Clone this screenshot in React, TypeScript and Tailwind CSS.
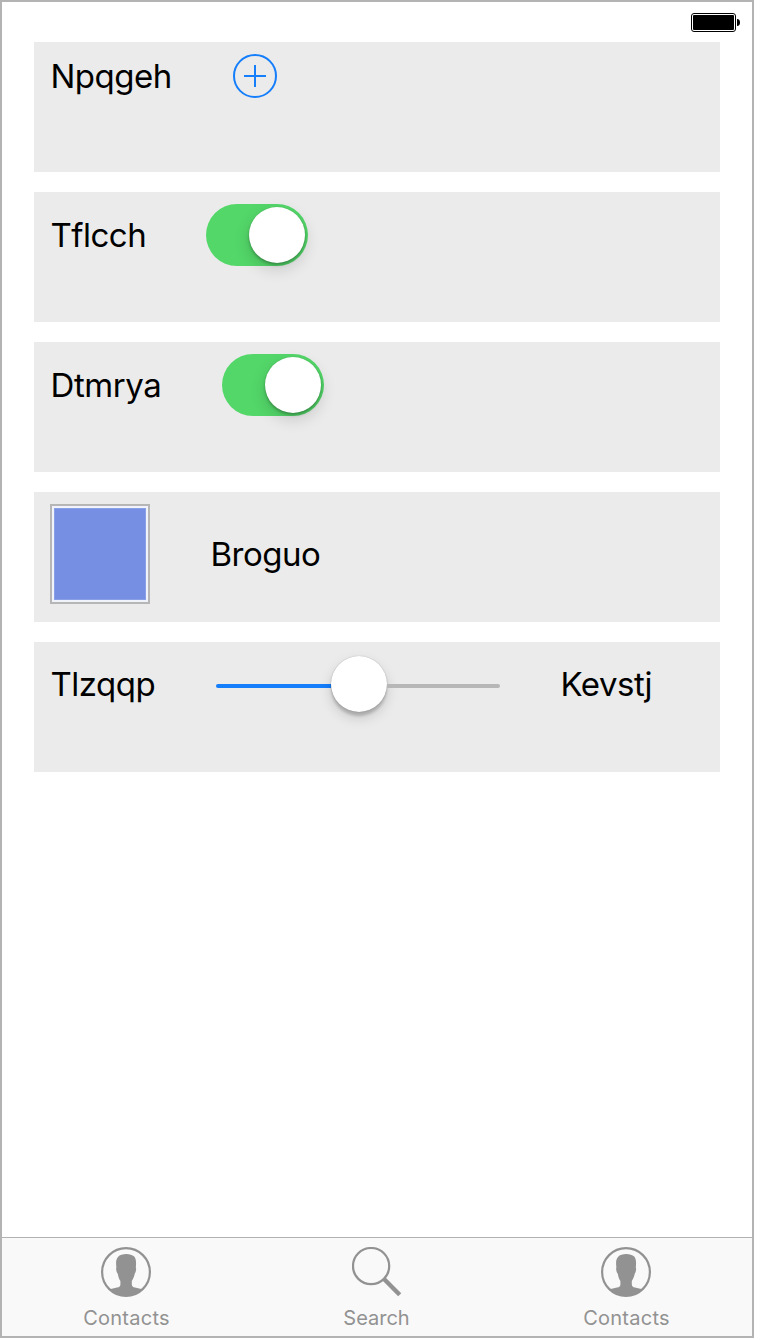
import type { ReactNode } from "react";

function Row({ children }: { children: ReactNode }) {
  return <section className="flex h-[130px] items-start gap-[60px] bg-[#ebebeb] px-4 pt-3">{children}</section>;
}

function Label({ children, className }: { children: ReactNode; className: string }) {
  return (
    <span className={"shrink-0 whitespace-nowrap pl-[0.5px] text-[33px] leading-10 text-black " + className}>{children}</span>
  );
}

function Switch() {
  return (
    <button role="switch" aria-checked="true" className="flex h-[62px] w-[102px] shrink-0 items-center justify-end rounded-full bg-[#53d769] pr-[3px]">
      <span className="size-14 rounded-full bg-white shadow-[0_6px_16px_rgba(0,0,0,0.16),0_2px_3px_rgba(0,0,0,0.25),0_0_1px_rgba(0,0,0,0.15)]" />
    </button>
  );
}

function ContactIcon() {
  return (
    <svg className="mr-[2px]" width="50" height="50" viewBox="0 0 50 50" fill="none">
      <circle cx="25" cy="25" r="23.9" stroke="#929292" strokeWidth="2.2" />
      <path
        fill="#929292"
        d="M15.4 20.5C14.8 16 14.9 12 17 10C18.6 7.8 22 7 25.3 7C28.5 7 31.5 8 33.2 9.6C35.3 12 35.3 16 34.8 20.5C35.6 21.5 34.8 25.5 33.8 26.5C33.2 29.5 32 32 30.8 34V37.5C31 39.5 32 40 34 40.6L41.3 42.3A24 24 0 0 1 8.7 42.3L16 40.6C18.5 40 19.3 39.5 19.4 37.5V34C18 32 17.3 29.5 16.7 26.5C15.4 25.5 14.7 21.5 15.4 20.5Z"
      />
    </svg>
  );
}

function SearchIcon() {
  return (
    <svg width="50" height="50" viewBox="0 0 50 50" fill="none" stroke="#929292">
      <circle cx="19.1" cy="19.1" r="18.1" strokeWidth="2.2" />
      <path d="M32 32L47.7 47.7" strokeWidth="4.4" />
    </svg>
  );
}

function Tab({ icon, children, className }: { icon: ReactNode; children: ReactNode; className: string }) {
  return (
    <button className="flex w-[250px] flex-col items-center pt-[9px] text-[#929292]">
      {icon}
      <span className={"mt-[9px] text-[20px] leading-6 " + className}>{children}</span>
    </button>
  );
}

export default function App() {
  return (
    <div className="h-[1340px] w-[760px] bg-white">
      <div className="flex h-[1338px] w-[754px] flex-col border-2 border-[#b3b3b3] bg-white font-['Inter',sans-serif]">
        <header className="flex h-10 shrink-0 justify-end pt-[11px] pr-3">
          <svg width="49" height="19" viewBox="0 0 49 19">
            <rect x="0.5" y="0.5" width="44" height="18" rx="2.5" fill="none" stroke="#000" />
            <rect x="2" y="2" width="41" height="15" rx="1" />
            <path d="M46 6C48.2 6 49 7.5 49 9.5S48.2 13 46 13Z" />
          </svg>
        </header>
        <main className="flex grow flex-col gap-5 pr-8 pl-8">
          <Row>
            <Label className="mt-[2px] w-[122px] tracking-[-0.5px]">Npqgeh</Label>
            <svg width="46" height="44" viewBox="0 0 46 44" fill="none" stroke="#157efb" strokeWidth="2">
              <circle cx="23" cy="22" r="21" />
              <path d="M12 22H34M23 11V33" />
            </svg>
          </Row>
          <Row>
            <Label className="mt-[11px] w-24 tracking-[-0.5px]">Tflcch</Label>
            <Switch />
          </Row>
          <Row>
            <Label className="mt-[11px] w-28 tracking-[-0.4px]">Dtmrya</Label>
            <Switch />
          </Row>
          <Row>
            <div className="size-[100px] shrink-0 border-2 border-[#b6b6b6] bg-[#f1f3fa] p-[2px]">
              <div className="size-full border border-[#8a9fe6] bg-[#768fe2]" />
            </div>
            <Label className="mt-[30px] tracking-[-0.5px]">Broguo</Label>
          </Row>
          <Row>
            <Label className="mt-[10px] w-[106px] tracking-[-0.5px]">Tlzqqp</Label>
            <div className="mt-[2px] flex h-14 w-[284px] shrink-0 items-center">
              <span className="mt-1 h-1 w-[115px] rounded-l-full bg-[#157efb]" />
              <span className="size-14 rounded-full bg-white shadow-[0_6px_13px_rgba(0,0,0,0.15),0_4px_3px_rgba(0,0,0,0.18),0_0_1px_rgba(0,0,0,0.35)]" />
              <span className="mt-1 h-1 grow rounded-r-full bg-[#b7b7b7]" />
            </div>
            <Label className="mt-[10px] tracking-[-0.5px]">Kevstj</Label>
          </Row>
        </main>
        <nav className="flex h-[99px] shrink-0 border-t border-[#b2b2b2] bg-[#f9f9f9]">
          <Tab icon={<ContactIcon />} className="mr-px tracking-[0.25px]">Contacts</Tab>
          <Tab icon={<SearchIcon />} className="mr-px tracking-normal">Search</Tab>
          <Tab icon={<ContactIcon />} className="mr-px tracking-[0.25px]">Contacts</Tab>
        </nav>
      </div>
    </div>
  );
}
